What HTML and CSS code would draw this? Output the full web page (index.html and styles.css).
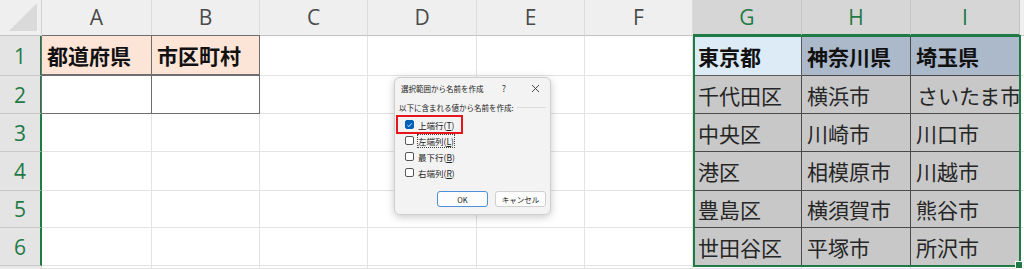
FILE: index.html
```html
<!DOCTYPE html>
<html lang="ja">
<head>
<meta charset="utf-8">
<link rel="stylesheet" href="styles.css">
</head>
<body>
<div class="sheet">
  <div class="corner"><div class="tri"></div></div>
  <div class="ch">A</div><div class="ch">B</div><div class="ch">C</div><div class="ch">D</div><div class="ch">E</div><div class="ch">F</div>
  <div class="ch sel">G</div><div class="ch sel">H</div><div class="ch sel">I</div><div class="ch rest"></div>

  <div class="rh">1</div>
  <div class="c peach b-tl bold">都道府県</div><div class="c peach b-tl b-r bold">市区町村</div>
  <div class="c"></div><div class="c"></div><div class="c"></div><div class="c"></div>
  <div class="c active bold">東京都</div><div class="c slate dk bold">神奈川県</div><div class="c slate dk bold">埼玉県</div><div class="c rest"></div>

  <div class="rh">2</div>
  <div class="c b-tl b-b"></div><div class="c b-tl b-r b-b"></div>
  <div class="c"></div><div class="c"></div><div class="c"></div><div class="c"></div>
  <div class="c gray dk">千代田区</div><div class="c gray dk">横浜市</div><div class="c gray dk clip">さいたま市</div><div class="c rest"></div>

  <div class="rh">3</div>
  <div class="c"></div><div class="c"></div>
  <div class="c"></div><div class="c"></div><div class="c"></div><div class="c"></div>
  <div class="c gray dk">中央区</div><div class="c gray dk">川崎市</div><div class="c gray dk">川口市</div><div class="c rest"></div>

  <div class="rh">4</div>
  <div class="c"></div><div class="c"></div>
  <div class="c"></div><div class="c"></div><div class="c"></div><div class="c"></div>
  <div class="c gray dk">港区</div><div class="c gray dk">相模原市</div><div class="c gray dk">川越市</div><div class="c rest"></div>

  <div class="rh">5</div>
  <div class="c"></div><div class="c"></div>
  <div class="c"></div><div class="c"></div><div class="c"></div><div class="c"></div>
  <div class="c gray dk">豊島区</div><div class="c gray dk">横須賀市</div><div class="c gray dk">熊谷市</div><div class="c rest"></div>

  <div class="rh">6</div>
  <div class="c"></div><div class="c"></div>
  <div class="c"></div><div class="c"></div><div class="c"></div><div class="c"></div>
  <div class="c gray dk">世田谷区</div><div class="c gray dk">平塚市</div><div class="c gray dk">所沢市</div><div class="c rest"></div>

  <div class="rh last"></div>
  <div class="c"></div><div class="c"></div><div class="c"></div><div class="c"></div><div class="c"></div><div class="c"></div>
  <div class="c"></div><div class="c"></div><div class="c"></div><div class="c rest"></div>

  <div class="selection"><div class="handle"></div></div>

  <div class="dialog">
    <div class="titlebar">
      <span class="title">選択範囲から名前を作成</span>
      <span class="help">?</span>
      <svg class="close" width="9" height="9" viewBox="0 0 9 9"><path d="M1 1 L8 8 M8 1 L1 8" stroke="#333" stroke-width="0.9" fill="none"/></svg>
    </div>
    <div class="group">
      <span>以下に含まれる値から名前を作成:</span><span class="rule"></span>
    </div>
    <div class="opts">
      <div class="opt hi"><span class="box on"><svg width="8" height="8" viewBox="0 0 8 8"><path d="M1.6 4.2 L3.3 5.8 L6.4 2.3" stroke="#fff" stroke-width="1" fill="none"/></svg></span><span>上端行(<u>T</u>)</span></div>
      <div class="opt"><span class="box"></span><span class="focus">左端列(<u>L</u>)</span></div>
      <div class="opt"><span class="box"></span><span>最下行(<u>B</u>)</span></div>
      <div class="opt"><span class="box"></span><span>右端列(<u>R</u>)</span></div>
    </div>
    <div class="buttons">
      <div class="btn primary">OK</div>
      <div class="btn">キャンセル</div>
    </div>
  </div>
</div>
</body>
</html>
```

FILE: styles.css
```css
html, body {
  margin: 0;
  padding: 0;
  background: #ffffff;
  overflow: hidden;
}
.sheet {
  position: relative;
  display: grid;
  grid-template-columns: 42px 110px 108px 108px 109px 108px 108px 109px 109px 109px 4px;
  grid-template-rows: 36px 40px 38px 38px 39px 37px 38px 3px;
  width: 1024px;
  height: 269px;
  font-family: "Noto Sans CJK JP", "Noto Sans", sans-serif;
}
.corner {
  background: #efefef;
  border-right: 1px solid #d2d2d2;
  border-bottom: 1px solid #c3c3c3;
  position: relative;
}
.tri {
  position: absolute;
  right: 4px;
  bottom: 4px;
  width: 0;
  height: 0;
  border-left: 28px solid transparent;
  border-bottom: 28px solid #dadada;
}
.ch {
  background: #efefef;
  border-right: 1px solid #dcdcdc;
  border-bottom: 1px solid #c3c3c3;
  display: flex;
  align-items: center;
  justify-content: center;
  font-family: "Open Sans", "Noto Sans", sans-serif;
  font-size: 21px;
  font-weight: 400;
  color: #4a4a4a;
  padding-bottom: 1px;
  box-sizing: border-box;
}
.ch.sel {
  background: #d6d6d6;
  color: #1f7a45;
  border-right: 1px solid #c4c4c4;
  border-bottom: 2px solid #1f7a45;
}
.ch.rest {
  background: #efefef;
  border-right: none;
}
.rh {
  background: #e4e4e4;
  border-right: 2px solid #1f7a45;
  border-bottom: 1px solid #c8c8c8;
  display: flex;
  align-items: center;
  justify-content: center;
  font-family: "Open Sans", "Noto Sans", sans-serif;
  font-size: 21px;
  color: #1f7a45;
  box-sizing: border-box;
}
.rh.last {
  border-right: 1px solid #d4d4d4;
  border-bottom: none;
  background: #e9e9e9;
}
.c {
  border-right: 1px solid #e3e3e3;
  border-bottom: 1px solid #e3e3e3;
  box-sizing: border-box;
  display: flex;
  align-items: center;
  padding-left: 5px;
  font-size: 21px;
  color: #262626;
  white-space: nowrap;
  overflow: hidden;
}
.c.rest { border-right: none; padding: 0; }
.bold { font-weight: 700; color: #111; }
.peach { background: #fce4d6; }
.b-tl { border-left: 1px solid #6e6e6e; border-top: 1px solid #6e6e6e; margin-left: -1px; margin-top: -1px; }
.b-r { border-right: 1px solid #6e6e6e; }
.b-b { border-bottom: 1px solid #6e6e6e; }
.peach.b-tl { border-bottom: 2px solid #6e6e6e; }
.active { background: #ddebf7; border-right: 1px solid #595959; border-bottom: 1px solid #595959; }
.slate { background: #acb9ca; }
.gray { background: #c8c8c8; }
.dk { border-right: 1px solid #4a4a4a; border-bottom: 1px solid #4a4a4a; }
.clip { overflow: hidden; padding-left: 6px; }
.selection {
  position: absolute;
  left: 693px;
  top: 35px;
  width: 328px;
  height: 232px;
  border: 2px solid #1f7a45;
  box-sizing: border-box;
  pointer-events: none;
}
.handle {
  position: absolute;
  right: -4px;
  bottom: -4px;
  width: 6px;
  height: 6px;
  background: #1f7a45;
  border: 1px solid #fff;
}
.dialog {
  position: absolute;
  left: 394px;
  top: 77px;
  width: 157px;
  height: 138px;
  box-sizing: border-box;
  background: #f3f3f3;
  border: 1px solid #cfcfcf;
  border-radius: 6px;
  box-shadow: 0 2px 8px rgba(0,0,0,0.22);
  font-family: "Noto Sans CJK JP", "Noto Sans", sans-serif;
  font-size: 7.5px;
  color: #222;
  display: flex;
  flex-direction: column;
}
.titlebar {
  height: 20px;
  display: flex;
  align-items: center;
  padding-left: 6px;
  padding-right: 10px;
}
.title { flex: 1; }
.help { font-size: 9px; margin-right: 25px; color: #333; }
.close { display: block; }
.group {
  height: 12px;
  margin-top: 3px;
  display: flex;
  align-items: center;
  padding-left: 4px;
  padding-right: 4px;
  gap: 3px;
}
.rule { flex: 1; height: 1px; background: #dcdcdc; }
.opts {
  margin-top: 4px;
  display: flex;
  flex-direction: column;
  align-items: flex-start;
  padding-left: 3px;
}
.opt {
  height: 15px;
  display: flex;
  align-items: center;
  gap: 4px;
  padding: 0 3px 0 7px;
  margin-bottom: 1px;
  font-size: 8.5px;
}
.opt.hi { outline: 2px solid #e8141c; padding-right: 7px; }
.box {
  width: 9px;
  height: 9px;
  box-sizing: border-box;
  border: 1px solid #555;
  border-radius: 2px;
  background: #fff;
  display: flex;
  align-items: center;
  justify-content: center;
}
.box.on { background: #005fb8; border-color: #005fb8; }
.box svg { display: block; }
.focus { outline: 1px dotted #444; outline-offset: 0; }
.buttons {
  margin-top: 10px;
  display: flex;
  justify-content: flex-end;
  gap: 7px;
  padding-right: 4px;
}
.btn {
  width: 51px;
  height: 16px;
  box-sizing: border-box;
  border: 1px solid #d0d0d0;
  border-radius: 3px;
  background: #fdfdfd;
  display: flex;
  align-items: center;
  justify-content: center;
  font-size: 7.5px;
  color: #222;
}
.btn.primary { border: 1px solid #4f8fd6; }
```
